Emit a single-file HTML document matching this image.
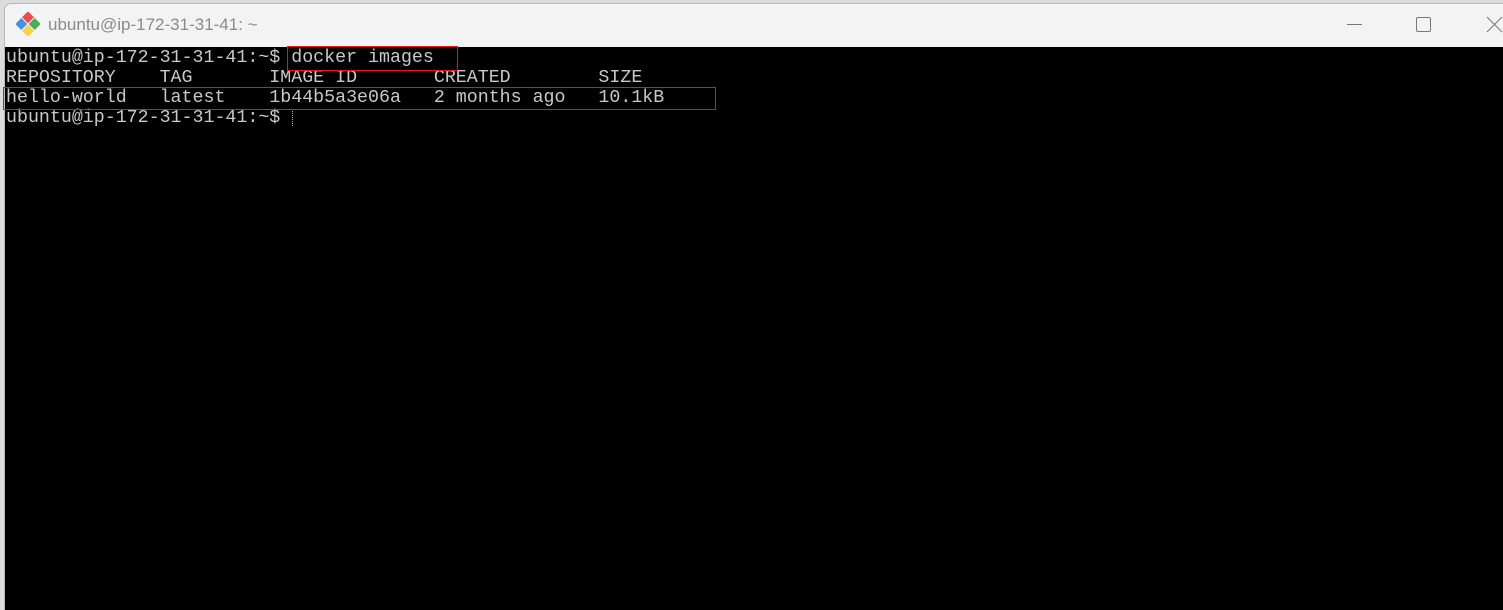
<!DOCTYPE html>
<html style="overflow:hidden;height:610px"><head><style>
body{margin:0;width:1503px;height:610px;overflow:hidden;background:#dcdcdc;position:relative;font-family:"Liberation Sans",sans-serif}
.win{position:absolute;left:4px;top:3px;width:1499px;height:607px;background:#f3f3f3;border-left:1px solid #b8b8b8;border-top:1px solid #b8b8b8;border-radius:7px 0 0 0;box-sizing:border-box}
.title{position:absolute;left:48px;top:15px;font-size:17px;color:#8a8a8a}
.term{position:absolute;left:5px;top:47px;width:1498px;height:563px;background:#000}
.t{position:absolute;left:6px;font-family:"Liberation Mono",monospace;font-size:18.3px;color:#c8c8c8;white-space:pre;line-height:20px}
.box{position:absolute;border:1px solid #e8141e}
</style></head><body>
<div class="win"></div>
<svg style="position:absolute;left:16px;top:12px" width="24" height="24" viewBox="0 0 24 24">
<g transform="rotate(45 12 12)">
<rect x="3" y="3" width="8.5" height="8.5" fill="#e84c52"/>
<rect x="12.5" y="3" width="8.5" height="8.5" fill="#4caf50"/>
<rect x="3" y="12.5" width="8.5" height="8.5" fill="#4a90e2"/>
<rect x="12.5" y="12.5" width="8.5" height="8.5" fill="#f7d04a"/>
</g></svg>
<div class="title">ubuntu@ip-172-31-31-41: ~</div>
<div style="position:absolute;left:1347px;top:24px;width:15px;height:1px;background:#777"></div>
<div style="position:absolute;left:1416px;top:17px;width:13px;height:13px;border:1px solid #777;border-radius:2px"></div>
<svg style="position:absolute;left:1486px;top:16px" width="17" height="17"><path d="M1 1L16 16M16 1L1 16" stroke="#777" stroke-width="1"/></svg>
<div class="term"></div>
<div class="t" style="top:48px">ubuntu@ip-172-31-31-41:~$ docker images</div>
<div class="t" style="top:68px">REPOSITORY    TAG       IMAGE ID       CREATED        SIZE</div>
<div class="t" style="top:88px">hello-world   latest    1b44b5a3e06a   2 months ago   10.1kB</div>
<div class="t" style="top:108px">ubuntu@ip-172-31-31-41:~$</div>
<div style="position:absolute;left:292px;top:109px;height:17px;border-left:1px dotted #aaa"></div>
<div class="box" style="left:287px;top:46px;width:169px;height:23px"></div>
<div class="box" style="left:3px;top:87px;width:711px;height:21px"></div>
</body></html>
